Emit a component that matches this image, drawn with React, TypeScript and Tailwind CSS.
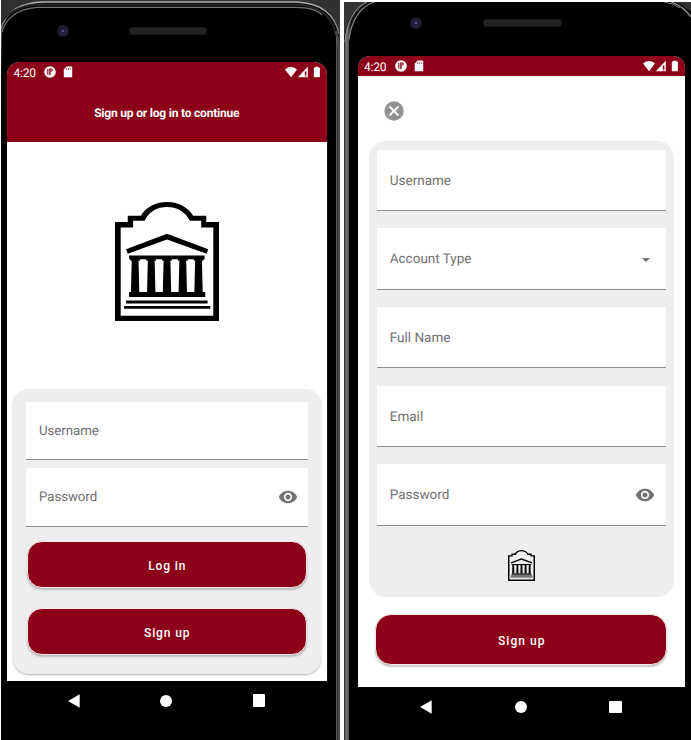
import React from "react";

type FieldProps = {
  label: string;
  icon?: React.ReactNode;
  className: string;
  labelClass: string;
};

function Field({ label, icon, className, labelClass }: FieldProps) {
  return (
    <div className={`flex shrink-0 items-center justify-between border-b border-[#8c8c8c] bg-white pl-[13px] text-[#707070] ${className}`}>
      <span className={`whitespace-nowrap ${labelClass}`}>{label}</span>
      {icon}
    </div>
  );
}

function Eye() {
  return (
    <svg className="h-5 w-5" viewBox="0 0 24 24" fill="#737373">
      <path d="M12 4.500C7 4.500 2.730 7.610 1 12c1.730 4.390 6 7.500 11 7.500s9.270-3.110 11-7.500c-1.730-4.390-6-7.500-11-7.500zM12 17c-2.760 0-5-2.240-5-5s2.240-5 5-5 5 2.240 5 5-2.240 5-5 5zm0-8c-1.660 0-3 1.340-3 3s1.340 3 3 3 3-1.340 3-3-1.340-3-3-3z" />
    </svg>
  );
}

function StatusBar({ className }: { className: string }) {
  return (
    <div className={`flex shrink-0 items-center justify-between bg-[#8c0019] text-white ${className}`}>
      <div className="flex items-center">
        <span className="w-[30.5px] pt-px text-[12px] leading-5 tracking-[-0.25px] whitespace-nowrap">4:20</span>
        <svg className="h-[12px] w-[12px]" viewBox="0 0 12 12">
          <circle cx="6" cy="6" r="5.800" fill="white" />
          <path d="M2.900 2.800H4.500V9.300Q3.500 8.900 2.900 8z" fill="#8c0019" opacity=".75" />
          <path d="M5.200 2.600H7.500C9.300 2.600 9.300 5.600 7.500 5.600H6.600V9H5.200z" fill="#8c0019" />
          <path d="M6.700 3.600H7.600V4.700H6.700z" fill="white" />
        </svg>
        <svg className="ml-[7px] h-[12px] w-[10px]" viewBox="0 0 10 12">
          <path d="M3.500.5H8.500Q9.200.5 9.200 1.300V10.700Q9.200 11.300 8.500 11.300H1.500Q.8 11.300.8 10.700V3.400z" fill="white" />
          <path d="M3.700 2V4M5.500 2V4M7.300 2V4" stroke="#8c0019" strokeWidth=".6" />
        </svg>
      </div>
      <svg className="h-[13px] w-[36px]" viewBox="0 0 36 13">
        <path d="M0 3.400Q6 -1.300 12 3.400L6 11.300z" fill="white" />
        <path d="M22.800.8V11.200H12.800z" fill="white" />
        <path d="M19.800 5.500H21.400V8.900H19.800zM19.800 9.500H21.400V10.500H19.800z" fill="#8c0019" />
        <path d="M30.200 1.600V.7H33.400V1.600H34.200Q34.900 1.600 34.900 2.300V10.500Q34.900 11.200 34.200 11.200H29.500Q28.800 11.200 28.800 10.500V2.300Q28.800 1.600 29.500 1.600z" fill="white" />
      </svg>
    </div>
  );
}

function TempleLogo({ className, small = false }: { className: string; small?: boolean }) {
  return (
    <svg className={className} viewBox="45 37 310 356" preserveAspectRatio="none" fill="#000">
      <path
        fillRule="evenodd"
        d="M45 97H83V78H122C138 51 168 37 200 37S262 51 278 78H317V97H355V393H45zM62 113V377H338V113H302V93H268C254 65 228 52 200 52S147 65 133 93H99V113z"
      />
      <path d="M78 178L200 132L323 178L318 192L200 149L83 192z" />
      <path d="M87 197H312V207L306 213H93L87 207z" />
      {[105, 153, 200, 247, 294].map((x) => (
        <path key={x} d={`M${x - 10} 205H${x + 10}L${x + 12.5} 308H${x - 12.5}z`} />
      ))}
      {[129, 176.500, 223.500, 271].map((x) => (
        <path key={x} d={`M${x - 9} 208H${x + 9}V213H${x + 13}V215H${x - 13}V213H${x - 9}z`} fill={small ? "#eee" : "#fff"} />
      ))}
      <path d="M87 306H314V321H87z" />
      {small ? (
        <path d="M80 323H321L329 356H72z" fill="#777" />
      ) : (
        <path d="M78 332H321V341H78zM72 348H329V356H72z" />
      )}
    </svg>
  );
}

function NavBar({ className }: { className: string }) {
  return (
    <div className={`flex shrink-0 items-center justify-between ${className}`}>
      <svg className="h-[14px] w-[12px]" viewBox="0 0 12 14"><path d="M0 7L11.700 .3V13.700z" fill="white" /></svg>
      <div className="h-3 w-3 rounded-full bg-white" />
      <div className="h-[12.5px] w-[12.5px] rounded-[1px] bg-white" />
    </div>
  );
}

function Lens() {
  return (
    <div className="flex h-3 w-3 items-center justify-center rounded-full bg-[#1d1c26]">
      <div className="flex h-[7px] w-[7px] items-center justify-center rounded-full bg-[#252147]">
        <div className="h-[2px] w-[2px] rounded-full bg-[#6865a0]" />
      </div>
    </div>
  );
}

const speaker = "rounded-[3px] border border-[#171717] bg-[#232323]";
const button =
  "flex shrink-0 items-center justify-center border-[1.5px] border-[#f8e9eb] bg-[#8c0019] pt-[3px] pl-[1px] text-[12px] font-medium text-white shadow-[0_2px_2px_rgba(0,0,0,0.22)]";

function LoginPhone() {
  const label = "text-[13.3px] tracking-[-0.08px] pt-[3px]";
  return (
    <section className="relative ml-px h-[740px] w-[339px] shrink-0 overflow-hidden bg-[#303132]">
      <svg className="absolute inset-0 h-full w-full" viewBox="1 0 339 740">
        <defs>
          <linearGradient id="leftRim" x1="0" x2="0" y1="0" y2="1">
            <stop offset="0" stopColor="#b5b5b5" />
            <stop offset=".2" stopColor="#888" />
            <stop offset=".6" stopColor="#151515" />
          </linearGradient>
        </defs>
        <path d="M1 740V27Q9 2 43 1.500H297Q335 3 339 35V740z" fill="#000" />
        <path d="M1 110V29Q8 3 43 2H297Q333 4 339 34" fill="none" stroke="url(#leftRim)" strokeWidth="1.500" />
        <path d="M1 23Q13 4 44 4.500H296Q327 6 335 30" fill="none" stroke="#262626" strokeWidth="2" />
        <path d="M2 32Q8 10 37 7.300H294Q315 7 322 15" fill="none" stroke="#737373" strokeWidth="1.200" />
        <path d="M335.500 31Q338.500 38 338.500 48V740" fill="none" stroke="#4a4a4a" strokeWidth="2.500" />
        <path d="M336.500 37V740" stroke="#777" strokeWidth=".7" />
        <path d="M326.700 142V681" stroke="#777" strokeWidth=".7" />
      </svg>
      <div className="relative flex h-full flex-col">
        <div className="flex h-[62px] shrink-0 items-center pl-[56px]">
          <Lens />
          <div className={`ml-[60px] h-2 w-[78px] ${speaker}`} />
        </div>
        <main className="ml-[6px] flex h-[619px] w-[319.5px] shrink-0 flex-col items-center overflow-hidden rounded-t-[13px] bg-white">
          <StatusBar className="h-5 w-full pr-[5.5px] pl-[6.5px]" />
          <header className="flex h-[60px] w-full shrink-0 items-center justify-center bg-[#8c0019] text-[12px] font-bold whitespace-nowrap text-white">
            <span className="pt-[2px] tracking-[-0.2px]">Sign up or log in to continue</span>
          </header>
          <TempleLogo className="mt-[60px] h-[119px] w-[104px] shrink-0" />
          <div className="mt-[68px] flex h-[285px] w-[308px] shrink-0 flex-col items-center rounded-[16px] bg-[#eee] pt-[12.5px] shadow-[0_1px_2px_rgba(0,0,0,0.3)]">
            <Field label="Username" className="h-[58.5px] w-[281.5px]" labelClass={label} />
            <Field label="Password" icon={<span className="mr-[10px] pt-px"><Eye /></span>} className="mt-[8px] h-[58.5px] w-[281.5px]" labelClass={label} />
            <button className={`mt-[14px] h-[47.5px] w-[280px] rounded-[15px] tracking-[0.9px] ${button}`}>Log in</button>
            <button className={`mt-[19.5px] h-[47.5px] w-[280px] rounded-[15px] tracking-[0.9px] ${button}`}>Sign up</button>
          </div>
        </main>
        <NavBar className="mr-[75px] ml-[67px] h-[39px]" />
      </div>
    </section>
  );
}

function SignupPhone() {
  const field = "h-[61.5px] w-[289px]";
  const label = "text-[13.5px] tracking-[0px] pt-[2px]";
  return (
    <section className="relative mt-[2px] ml-[4px] h-[738px] w-[347px] shrink-0 overflow-hidden bg-black">
      <svg className="absolute inset-0 h-full w-full" viewBox="344 2 347 738">
        <defs>
          <linearGradient id="rightRim" x1="0" x2="1">
            <stop offset="0" stopColor="#222" />
            <stop offset=".08" stopColor="#777" />
            <stop offset=".16" stopColor="#555" />
            <stop offset=".25" stopColor="#111" />
          </linearGradient>
        </defs>
        <path d="M344 2H367Q347 11 344 40z" fill="#333435" />
        <path d="M344 43Q347 11 367 2H372Q353 12 349 43V740H344z" fill="url(#rightRim)" />
        <path d="M345 42Q348 11 367 2M349 39Q353 10 374 2" fill="none" stroke="#888" strokeWidth="1.200" />
        <path d="M674 2H691V12Q684 5 674 2" fill="#303030" />
        <path d="M671 2Q683 6 691 17" fill="none" stroke="#a5a5a5" strokeWidth="1.200" />
        <path d="M664 2Q673 3 680 8" fill="none" stroke="#777" />
      </svg>
      <div className="relative flex h-full flex-col">
        <div className="flex h-[54px] shrink-0 items-start pt-[15px] pl-[65.5px]">
          <Lens />
          <div className={`mt-[2px] ml-[61px] h-2 w-[79px] ${speaker}`} />
        </div>
        <main className="ml-[13.5px] flex h-[630.5px] w-[327.5px] shrink-0 flex-col items-center overflow-hidden rounded-t-[12px] bg-white">
          <StatusBar className="h-5 w-full pr-[6px] pl-[6.5px]" />
          <div className="flex h-[65px] w-full shrink-0 items-start pt-[25px] pl-[26.5px]">
            <svg className="h-5 w-5" viewBox="0 0 20 20">
              <circle cx="10" cy="10" r="9.700" fill="#929292" />
              <path d="M5.500 5.500L14.500 14.500M14.500 5.500L5.500 14.500" stroke="white" strokeWidth="1.800" />
            </svg>
          </div>
          <div className="flex h-[456px] w-[305.5px] shrink-0 flex-col items-center gap-[17.2px] rounded-[17px] bg-[#eee] pt-[8.5px]">
            <Field label="Username" className={field} labelClass={label} />
            <Field
              label="Account Type"
              icon={<svg className="mt-[3px] mr-[16px] h-[4px] w-[8px]" viewBox="0 0 8 4"><path d="M0 0H8L4 4z" fill="#707070" /></svg>}
              className={field}
              labelClass={label}
            />
            <Field label="Full Name" className={field} labelClass={label} />
            <Field label="Email" className={field} labelClass={label} />
            <Field label="Password" icon={<span className="mr-[10.5px]"><Eye /></span>} className={field} labelClass={label} />
            <TempleLogo small className="mt-[7px] h-[31px] w-[27px] shrink-0" />
          </div>
          <button className={`mt-[17px] h-[50.5px] w-[292px] rounded-[16px] tracking-[1.05px] ${button}`}>Sign up</button>
        </main>
        <NavBar className="mr-[69.5px] ml-[76px] h-[41px]" />
      </div>
    </section>
  );
}

export default function App() {
  return (
    <div className="flex h-[740px] w-[691px] overflow-hidden bg-white font-[Roboto,sans-serif] [text-rendering:geometricPrecision]">
      <LoginPhone />
      <SignupPhone />
    </div>
  );
}
